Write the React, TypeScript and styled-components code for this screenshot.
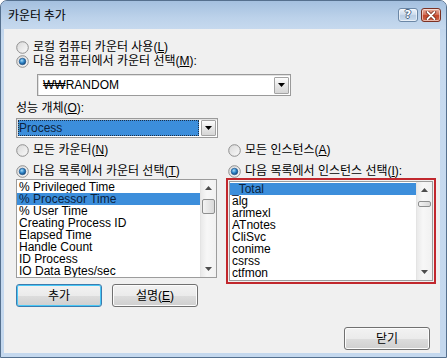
import React, { useId } from 'react'
import styled, { createGlobalStyle } from 'styled-components'

const GlobalStyle = createGlobalStyle`
  html, body {
    margin: 0;
    padding: 0;
    background: #fff;
  }
  body {
    font-family: 'Liberation Sans', 'Noto Sans CJK KR', sans-serif;
    font-size: 12px;
    color: #000;
  }
  * {
    box-sizing: border-box;
  }
`

const Window = styled.div`
  width: 447px;
  height: 358px;
  display: flex;
  flex-direction: column;
  background: linear-gradient(#b5cde8 0px, #c7daef 40px, #c4d8ee 100%);
  border: 1px solid #55708e;
  border-radius: 7px 7px 0 0;
  overflow: hidden;
`

const TitleBar = styled.div`
  height: 28px;
  flex: none;
  display: flex;
  align-items: center;
  justify-content: space-between;
  padding: 0 5px 0 7px;
  background: linear-gradient(#a4c0df, #bcd2ea 60%, #c6d9ee);
`

const Title = styled.span`
  font-family: 'Noto Sans CJK KR', sans-serif;
  font-size: 12px;
  line-height: 14px;
  color: #000;
`

const CaptionButtons = styled.div`
  display: flex;
  gap: 3px;
`

const CaptionButton = styled.div<{ $close?: boolean }>`
  width: 20px;
  height: 14px;
  border-radius: 3px;
  border: 1px solid ${p => (p.$close ? '#7b3123' : '#6b87a6')};
  background: ${p =>
    p.$close
      ? 'linear-gradient(#eab1a2, #d7745d 45%, #c2452b 55%, #d36a4e)'
      : 'linear-gradient(#eef4fb, #cfdded 45%, #b9cde3 55%, #cbdcee)'};
  box-shadow: inset 0 0 0 1px rgba(255, 255, 255, 0.55);
  display: flex;
  align-items: center;
  justify-content: center;
  font-family: 'DejaVu Sans', sans-serif;
  font-weight: bold;
  font-size: 11px;
  line-height: 12px;
  color: #fff;
  text-shadow: 1px 0 #4a6584, -1px 0 #4a6584, 0 1px #4a6584, 0 -1px #4a6584;
`

const Body = styled.div`
  flex: 1;
  margin: 0 6px 4px 3px;
  background: #f0f0f0;
  padding: 11px 10px 0 12px;
  display: flex;
  flex-direction: column;
`

const RadioRow = styled.label<{ $gap?: number }>`
  height: 14px;
  margin-top: ${p => p.$gap ?? 0}px;
  display: flex;
  align-items: center;
  gap: 4px;
  font-size: 12px;
  line-height: 14px;
  white-space: nowrap;
`

const FieldLabel = styled.div`
  height: 14px;
  margin-top: 5px;
  line-height: 14px;
  font-size: 12px;
`

const Combo = styled.div<{ $width: number; $height: number; $indent?: number; $top: number }>`
  width: ${p => p.$width}px;
  height: ${p => p.$height}px;
  margin-left: ${p => p.$indent ?? 0}px;
  margin-top: ${p => p.$top}px;
  border: 1px solid #9a9a9a;
  box-shadow: inset 1px 1px 0 #e2e2e2;
  background: #fff;
  display: flex;
  align-items: center;
  padding: 1px;
`

const ComboValue = styled.div<{ $selected?: boolean }>`
  flex: 1;
  height: 100%;
  display: flex;
  align-items: center;
  padding-left: ${p => (p.$selected ? 1 : 4)}px;
  font-size: 12px;
  line-height: 13px;
  background: ${p => (p.$selected ? '#3c8edb' : 'transparent')};
  color: ${p => (p.$selected ? '#0b2340' : '#000')};
  outline: ${p => (p.$selected ? '1px dotted #1a2f48' : 'none')};
  outline-offset: -1px;
  margin-right: 2px;
`

const DropButton = styled.div`
  width: 15px;
  height: 100%;
  max-height: 17px;
  border: 1px solid #a3a3a3;
  border-radius: 1px;
  background: linear-gradient(#fdfdfd, #e6e6e6 50%, #d6d6d6);
  display: flex;
  align-items: center;
  justify-content: center;
`

const Columns = styled.div`
  margin-top: 5px;
  display: grid;
  grid-template-columns: 201px 210px;
  column-gap: 9px;
`

const Column = styled.div<{ $inset?: number }>`
  display: flex;
  flex-direction: column;
  padding-left: ${p => p.$inset ?? 0}px;
`

const ListFrame = styled.div`
  margin-left: -2px;
  border: 2px solid #c1272d;
  padding: 1px;
`

const ListBox = styled.div<{ $top?: number; $height: number }>`
  height: ${p => p.$height}px;
  margin-top: ${p => p.$top ?? 0}px;
  border: 1px solid #9c9c9c;
  background: #fff;
  display: flex;
  padding: 1px 0 0 0;
`

const Items = styled.div`
  flex: 1;
  display: flex;
  flex-direction: column;
  overflow: hidden;
`

const Item = styled.div<{ $selected?: boolean }>`
  height: 12px;
  flex: none;
  padding-left: 2px;
  font-size: 12px;
  line-height: 12px;
  white-space: nowrap;
  background: ${p => (p.$selected ? '#3c8edb' : 'transparent')};
  color: ${p => (p.$selected ? '#0b2340' : '#000')};
`

const ScrollBar = styled.div`
  width: 16px;
  flex: none;
  margin-top: -1px;
  background: linear-gradient(90deg, #eaeaea, #f7f7f7 40%, #f1f1f1);
  border-left: 1px solid #e4e4e4;
  display: flex;
  flex-direction: column;
  align-items: center;
`

const ScrollArrow = styled.div`
  height: 16px;
  width: 100%;
  flex: none;
  display: flex;
  align-items: center;
  justify-content: center;
`

const Thumb = styled.div<{ $top: number; $height: number }>`
  width: 13px;
  height: ${p => p.$height}px;
  margin-top: ${p => p.$top}px;
  border: 1px solid #8e8f8f;
  border-radius: 2px;
  background: linear-gradient(90deg, #f3f3f3, #e6e6e6 50%, #d9d9d9);
  flex: none;
`

const Fill = styled.div`
  flex: 1;
`

const ButtonRow = styled.div`
  margin-top: 6px;
  display: flex;
  gap: 10px;
`

const PushButton = styled.button<{ $default?: boolean }>`
  width: 86px;
  height: 23px;
  padding: 0;
  border: 1px solid ${p => (p.$default ? '#3d7bad' : '#707070')};
  border-radius: 3px;
  background: linear-gradient(#f2f2f2, #ebebeb 50%, #dddddd 51%, #cfcfcf);
  box-shadow: ${p =>
    p.$default ? 'inset 0 0 0 1px #48c8f7' : 'inset 0 0 0 1px #fcfcfc'};
  font-family: 'Liberation Sans', 'Noto Sans CJK KR', sans-serif;
  font-size: 12px;
  line-height: 14px;
  color: #000;
`

const Footer = styled.div`
  margin-top: 20px;
  display: flex;
  justify-content: flex-end;
`

function Radio({ checked }: { checked?: boolean }) {
  const id = useId()
  return (
    <svg width="13" height="13" viewBox="0 0 13 13">
      <defs>
        <linearGradient id={id + 'f'} x1="0" y1="0" x2="1" y2="1">
          <stop offset="0" stopColor="#d8d8d8" />
          <stop offset="1" stopColor="#fbfbfb" />
        </linearGradient>
        <radialGradient id={id + 'd'} cx="0.4" cy="0.35" r="0.7">
          <stop offset="0" stopColor="#a9dcf8" />
          <stop offset="0.5" stopColor="#2f86c9" />
          <stop offset="1" stopColor="#12406f" />
        </radialGradient>
      </defs>
      <circle cx="6.5" cy="6.5" r="5.8" fill={`url(#${id}f)`} stroke="#8f8f8f" strokeWidth="1" />
      {checked && <circle cx="6.5" cy="6.5" r="3.3" fill={`url(#${id}d)`} stroke="#1b4f86" strokeWidth="0.6" />}
    </svg>
  )
}

function DownTriangle({ size = 7 }: { size?: number }) {
  return (
    <svg width={size} height={Math.ceil(size / 2)} viewBox="0 0 7 4">
      <path d="M0 0 H7 L3.5 4 Z" fill="#000" />
    </svg>
  )
}

function ScrollTriangle({ up }: { up?: boolean }) {
  return (
    <svg width="7" height="4" viewBox="0 0 7 4">
      <path d={up ? 'M0 4 H7 L3.5 0 Z' : 'M0 0 H7 L3.5 4 Z'} fill="#4d4d4d" />
    </svg>
  )
}

function CloseGlyph() {
  return (
    <svg width="12" height="9" viewBox="0 0 12 9">
      <path d="M2.5 1 L9.5 8 M9.5 1 L2.5 8" stroke="#6e2316" strokeWidth="3.4" strokeLinecap="round" />
      <path d="M2.5 1 L9.5 8 M9.5 1 L2.5 8" stroke="#fff" strokeWidth="1.8" strokeLinecap="round" />
    </svg>
  )
}

type ListProps = {
  items: string[]
  selected: number
  height: number
  top?: number
  thumbTop: number
  thumbHeight: number
}

function List({ items, selected, height, top, thumbTop, thumbHeight }: ListProps) {
  return (
    <ListBox $height={height} $top={top}>
      <Items>
        {items.map((item, i) => (
          <Item key={item} $selected={i === selected}>
            {item}
          </Item>
        ))}
      </Items>
      <ScrollBar>
        <ScrollArrow>
          <ScrollTriangle up />
        </ScrollArrow>
        <Thumb $top={thumbTop} $height={thumbHeight} />
        <Fill />
        <ScrollArrow>
          <ScrollTriangle />
        </ScrollArrow>
      </ScrollBar>
    </ListBox>
  )
}

const counters = [
  '% Privileged Time',
  '% Processor Time',
  '% User Time',
  'Creating Process ID',
  'Elapsed Time',
  'Handle Count',
  'ID Process',
  'IO Data Bytes/sec',
]

const instances = ['_Total', 'alg', 'arimexl', 'ATnotes', 'CliSvc', 'conime', 'csrss', 'ctfmon']

export default function App() {
  return (
    <>
      <GlobalStyle />
      <Window>
        <TitleBar>
          <Title>카운터 추가</Title>
          <CaptionButtons>
            <CaptionButton>?</CaptionButton>
            <CaptionButton $close>
              <CloseGlyph />
            </CaptionButton>
          </CaptionButtons>
        </TitleBar>
        <Body>
          <RadioRow>
            <Radio />
            <span>
              로컬 컴퓨터 카운터 사용(<u>L</u>)
            </span>
          </RadioRow>
          <RadioRow>
            <Radio checked />
            <span>
              다음 컴퓨터에서 카운터 선택(<u>M</u>):
            </span>
          </RadioRow>
          <Combo $width={254} $height={22} $indent={21} $top={6}>
            <ComboValue>₩₩RANDOM</ComboValue>
            <DropButton>
              <DownTriangle />
            </DropButton>
          </Combo>
          <FieldLabel>
            성능 개체(<u>O</u>):
          </FieldLabel>
          <Combo $width={202} $height={20} $top={3}>
            <ComboValue $selected>Process</ComboValue>
            <DropButton>
              <DownTriangle />
            </DropButton>
          </Combo>
          <Columns>
            <Column>
              <RadioRow>
                <Radio />
                <span>
                  모든 카운터(<u>N</u>)
                </span>
              </RadioRow>
              <RadioRow $gap={7}>
                <Radio checked />
                <span>
                  다음 목록에서 카운터 선택(<u>T</u>)
                </span>
              </RadioRow>
              <List items={counters} selected={1} height={99} top={1} thumbTop={3} thumbHeight={15} />
              <ButtonRow>
                <PushButton $default>추가</PushButton>
                <PushButton>
                  설명(<u>E</u>)
                </PushButton>
              </ButtonRow>
            </Column>
            <Column $inset={2}>
              <RadioRow>
                <Radio />
                <span>
                  모든 인스턴스(<u>A</u>)
                </span>
              </RadioRow>
              <RadioRow $gap={7}>
                <Radio checked />
                <span>
                  다음 목록에서 인스턴스 선택(<u>I</u>):
                </span>
              </RadioRow>
              <ListFrame>
                <List items={instances} selected={0} height={100} thumbTop={3} thumbHeight={6} />
              </ListFrame>
            </Column>
          </Columns>
          <Footer>
            <PushButton>닫기</PushButton>
          </Footer>
        </Body>
      </Window>
    </>
  )
}
